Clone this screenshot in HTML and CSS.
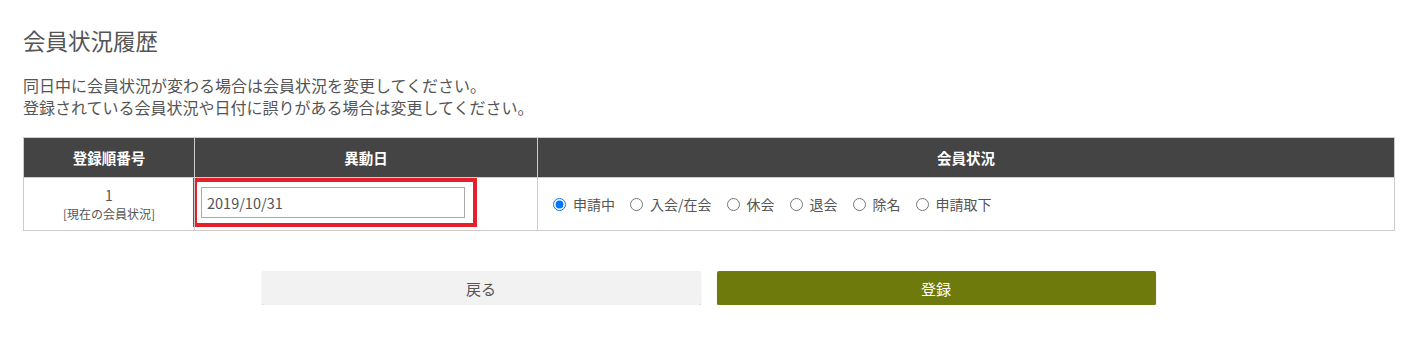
FILE: index.html
```html
<!DOCTYPE html>
<html lang="ja">
<head>
  <meta charset="UTF-8">
  <title>会員状況履歴</title>
  <link rel="stylesheet" href="styles.css">
</head>
<body>
  <div class="page">
    <h2 class="title">会員状況履歴</h2>
    <p class="note">
      同日中に会員状況が変わる場合は会員状況を変更してください。<br>
      登録されている会員状況や日付に誤りがある場合は変更してください。
    </p>

    <table class="history">
      <thead>
        <tr>
          <th class="col-no">登録順番号</th>
          <th class="col-date">異動日</th>
          <th>会員状況</th>
        </tr>
      </thead>
      <tbody>
        <tr>
          <td class="no">1<br><span class="current">[現在の会員状況]</span></td>
          <td class="date">
            <div class="highlight"><input type="text" value="2019/10/31"></div>
          </td>
          <td>
            <div class="status">
              <label><input type="radio" name="st" checked>申請中</label>
              <label><input type="radio" name="st">入会/在会</label>
              <label><input type="radio" name="st">休会</label>
              <label><input type="radio" name="st">退会</label>
              <label><input type="radio" name="st">除名</label>
              <label><input type="radio" name="st">申請取下</label>
            </div>
          </td>
        </tr>
      </tbody>
    </table>

    <div class="actions">
      <button class="btn back">戻る</button>
      <button class="btn submit">登録</button>
    </div>
  </div>
</body>
</html>
```

FILE: styles.css
```css
* { box-sizing: border-box; margin: 0; padding: 0; }
body {
  font-family: "Noto Sans CJK JP", "Noto Sans", sans-serif;
  background: #fff;
  color: #555;
}
.page {
  padding: 26px 23px 0 23px;
}
.title {
  font-size: 22.5px;
  font-weight: normal;
  color: #555;
  line-height: 28px;
  margin-bottom: 20px;
}
.note {
  font-size: 16px;
  line-height: 22px;
  margin-bottom: 19px;
}
.history {
  width: 1372px;
  border-collapse: collapse;
  font-size: 14.5px;
}
.history th {
  background: #444;
  color: #fff;
  height: 40px;
  font-weight: bold;
  border: 1px solid #ccc;
}
.history th.col-no { width: 171px; }
.history th.col-date { width: 343px; }
.history td {
  border: 1px solid #ccc;
  height: 53px;
  vertical-align: middle;
}
td.no {
  text-align: center;
  line-height: 18px;
  font-size: 14px;
}
td.no .current { font-size: 12px; }
td.date { padding: 0; }
.highlight {
  border: 4px solid #e4202a;
  padding: 5px 8px 5px 4px;
  margin: -1px 60px 3px -2px;
}
.highlight input {
  width: 264px;
  height: 31px;
  border: 1px solid #aaa;
  padding: 0 5px;
  font-family: inherit;
  font-size: 14.5px;
  color: #555;
}
.status {
  display: flex;
  align-items: center;
  gap: 15px;
  padding: 0 15px;
  font-size: 14px;
}
.status label {
  display: inline-flex;
  align-items: center;
  gap: 7px;
  white-space: nowrap;
}
.status input[type=radio] {
  width: 13px;
  height: 13px;
  margin: 0;
}
.actions {
  display: flex;
  justify-content: center;
  gap: 16px;
  margin-top: 40px;
}
.btn {
  width: 439px;
  height: 34px;
  border: none;
  border-radius: 2px;
  font-family: inherit;
  font-size: 15px;
  box-shadow: 0 1px 1px rgba(0,0,0,0.3);
}
.btn.back {
  background: #f2f2f2;
  color: #555;
}
.btn.submit {
  background: #6e7a0b;
  color: #fff;
}
```
